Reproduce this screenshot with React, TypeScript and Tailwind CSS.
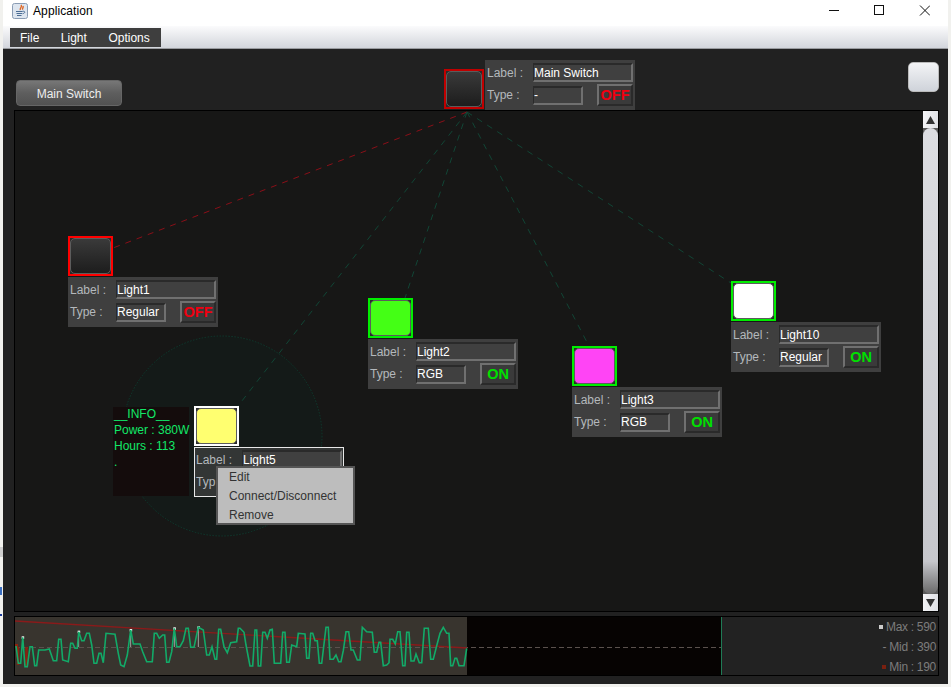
const wave = [
[48,138],[55,190],[62,190],[68,112],[75,200],[82,200],[90,140],[97,140],[104,197],[110,197],[116,150],[135,150],[148,147],[160,182],[170,182],[176,118],[183,118],[188,180],[205,185],[212,130],[218,130],[225,145],[232,145],[236,95],[245,122],[252,122],[260,100],[268,100],[275,135],[282,190],[290,190],[297,160],[303,160],[310,188],[318,100],[345,103],[355,160],[362,195],[372,200],[382,165],[392,90],[400,132],[420,132],[428,155],[440,185],[457,185],[463,100],[470,100],[478,115],[488,105],[494,105],[500,187],[507,187],[515,155],[523,85],[530,140],[540,140],[550,122],[558,85],[565,85],[572,142],[582,142],[595,82],[610,90],[620,165],[628,165],[636,140],[645,178],[650,178],[656,88],[662,88],[672,140],[682,158],[692,128],[710,125],[715,85],
[720,85],[732,97],[738,135],[750,198],[758,198],[765,90],[770,90],[775,198],[782,198],[788,97],[795,97],[802,115],[810,90],[817,88],[823,190],[842,190],[848,97],[855,97],[860,187],[868,187],[875,135],[890,140],[895,100],[915,102],[920,175],[927,175],[932,100],[938,100],[945,122],[952,122],[958,190],[965,190],[978,82],[985,82],[990,178],[1000,178],[1008,165],[1016,185],[1023,185],[1030,152],[1038,95],[1046,95],[1053,150],[1060,150],[1072,180],[1080,180],[1087,82],[1100,95],[1117,97],[1123,157],[1130,157],[1137,127],[1142,127],[1150,197],[1160,195],[1167,188],[1170,118],[1178,118],[1186,132],[1193,95],[1200,95],[1208,197],[1215,197],[1220,97],[1227,97],[1233,183],[1242,183],[1248,162],[1258,188],[1265,188],[1273,85],[1285,85],[1292,178],[1300,178],[1310,137],[1320,100],[1330,82],[1340,100],[1347,100],[1352,197],[1358,197],[1365,175],[1370,175],[1377,197],[1392,197],[1400,145],
];
const wavePoints = wave.map(([x, y]) => `${(x / 3 - 15).toFixed(1)},${(y / 3).toFixed(1)}`).join(" ");
const peaks = [[48,138],[68,112],[236,95],[392,90],[523,85],[595,82]];

const field = "flex h-[19px] items-center border-2 border-l-[1px] border-b-[#707070] border-l-[#2a2a2a] border-r-[#707070] border-t-[#2a2a2a] bg-[#404040] leading-none text-white";

function Panel({ label, type, on }: { label: string; type: string; on: boolean }) {
  return (
    <div className="flex h-[50px] w-[150px] flex-col gap-[2px] bg-[#3f3f3f] pl-[2px] pt-[3px] text-[12px]">
      <div className="flex h-[19px] items-center">
        <span className="w-[46px] shrink-0 text-[#b4b8bc]">Label :</span>
        <span className={`${field} w-[100px]`}>{label}</span>
      </div>
      <div className="flex h-[22px] items-center">
        <span className="w-[46px] shrink-0 text-[#b4b8bc]">Type :</span>
        <span className={`${field} w-[50px]`}>{type}</span>
        <span className={`ml-[14px] flex h-[22px] w-[36px] items-center justify-center border-2 border-b-[#2a2a2a] border-l-[#707070] border-r-[#2a2a2a] border-t-[#707070] bg-[#3a3a3a] text-[14.5px] font-bold leading-none ${on ? "text-[#00e000]" : "text-[#f00010]"}`}>{on ? "ON" : "OFF"}</span>
      </div>
    </div>
  );
}

function Lamp({ border, fill }: { border: string; fill: string }) {
  return (
    <div className={`h-[40px] w-[45px] border-2 bg-[#2a2a2a] ${border}`}>
      <div className={`h-full w-full rounded-[5px] border border-[#5c5c5c] ${fill}`} />
    </div>
  );
}

function Node({ pos, label, type, on, border, fill }: { pos: string; label: string; type: string; on: boolean; border: string; fill: string }) {
  return (
    <div className={`absolute flex flex-col gap-[1px] ${pos}`}>
      <Lamp border={border} fill={fill} />
      <Panel label={label} type={type} on={on} />
    </div>
  );
}

export default function App() {
  return (
    <div className="relative h-[687px] w-[951px] overflow-hidden bg-[#f1f1ee] pb-[3px] pl-[3px] pr-[3px] font-['Liberation_Sans',Arial,sans-serif]">
      <div className="absolute left-0 top-[547px] h-[10px] w-[3px] bg-[#cfcfcf]" />
      <div className="absolute left-0 top-[587px] h-[8px] w-[2px] bg-[#3a6ec0]" />
      <div className="absolute left-0 top-[614px] h-[2px] w-[2px] bg-[#1a3a9a]" />
      <div className="flex h-[684px] flex-col">
        <header className="flex h-[26px] shrink-0 items-start bg-white pt-[3px]">
          <svg className="ml-[9px] h-[16px] w-[16px]" viewBox="0 0 16 16">
            <rect x="0.5" y="0.5" width="15" height="15" rx="2" fill="#dde5ef" stroke="#8a9cb4" />
            <path d="M9 2c2 2-2 3-.5 5M11 3c.8 1.6-1 2.4-.3 3.6" stroke="#e0641e" strokeWidth="1.4" fill="none" />
            <path d="M4 8.5h6.5M4.5 10.5h5.5M5 12.5h4.5" stroke="#4a6c94" strokeWidth="1.1" fill="none" />
            <path d="M10.5 8.3c3-.5 3 2 0 2.4" stroke="#4a6c94" fill="none" />
          </svg>
          <span className="ml-[5px] text-[12px] leading-[16px] tracking-[0.1px] text-black">Application</span>
          <svg className="ml-auto mr-[18px] mt-[2px] h-[12px] w-[101px]" viewBox="0 0 101 12" fill="none" stroke="#111">
            <path d="M0 5.5h10" />
            <rect x="45.5" y="0.5" width="9" height="9" />
            <path d="M91 .5l10 10M101 .5l-10 10" />
          </svg>
        </header>
        <div className="flex h-[23px] shrink-0 items-start border-b border-b-[#9a9ca0] bg-gradient-to-b from-[#fbfbfc] to-[#d3d6dc] pl-[7px] pt-[2px]">
          <nav className="flex h-[19px] w-[151px] items-center gap-[21.5px] bg-[#3e3e3e] pl-[10px] text-[12px] text-white">
            <span>File</span>
            <span>Light</span>
            <span>Options</span>
          </nav>
        </div>
        <main className="relative flex flex-1 flex-col bg-[#212121] pl-[11px] pr-[9px]">
          <div className="flex h-[61px] shrink-0 items-start justify-between">
            <button className="ml-[2px] mt-[31px] flex h-[26px] w-[106px] items-center justify-center rounded-[4px] border border-[#666] bg-gradient-to-b from-[#777777] via-[#5e5e5e] to-[#525252] pt-[1px] text-[12px] text-[#eeeeee]">Main Switch</button>
            <div className="mt-[13px] h-[30px] w-[31px] rounded-[5px] border border-[#bbb] bg-gradient-to-b from-[#f3f4f6] to-[#cfd3da]" />
          </div>
          <div className="absolute left-[441px] top-[11px] flex items-start">
            <div className="mt-[9px] h-[40px] w-[40px] border-2 border-[#c00000] bg-[#2a2a2a]">
              <div className="h-full w-full rounded-[5px] border border-[#5c5c5c] bg-gradient-to-b from-[#3a3a3a] to-[#1d1d1d]" />
            </div>
            <div className="ml-[1px]"><Panel label="Main Switch" type="-" on={false} /></div>
          </div>
          <div className="flex h-[502px] shrink-0 border border-black">
            <div className="relative flex-1 overflow-hidden bg-[#171716]">
              <svg className="absolute left-[-3px] top-[-1px] h-[502px] w-[910px]" viewBox="12 110 910 502" fill="none">
                <circle cx="222" cy="436" r="100" fill="#141a18" stroke="#0f3a2e" strokeDasharray="1.5 1.5" />
                <g strokeDasharray="6 6" strokeWidth="1">
                  <path d="M467 112L113 248" stroke="#8a0f18" />
                  <path d="M467 112L405 298" stroke="#114535" />
                  <path d="M467 112L590 348" stroke="#114535" />
                  <path d="M467 112L731 283" stroke="#114535" />
                  <path d="M467 112L238 406" stroke="#114535" />
                </g>
              </svg>
              <Node pos="left-[53px] top-[125px]" label="Light1" type="Regular" on={false} border="border-[#ff0000]" fill="bg-gradient-to-b from-[#3a3a3a] to-[#1d1d1d]" />
              <Node pos="left-[353px] top-[187px]" label="Light2" type="RGB" on border="border-[#00ee00]" fill="bg-[#44ff15]" />
              <Node pos="left-[557px] top-[235px]" label="Light3" type="RGB" on border="border-[#00ee00]" fill="bg-[#ff44f5]" />
              <Node pos="left-[716px] top-[170px]" label="Light10" type="Regular" on border="border-[#00ee00]" fill="bg-white" />
              <div className="absolute left-[98px] top-[296px] flex h-[89px] w-[76px] flex-col gap-[3px] bg-[#140c0c] pl-[1px] pt-[1px] text-[12px] leading-[13px] text-[#12e868]">
                <span>__INFO__</span>
                <span className="whitespace-nowrap">Power : 380W</span>
                <span>Hours : 113</span>
                <span>.</span>
              </div>
              <div className="absolute left-[179px] top-[295px] flex flex-col gap-[1px]">
                <Lamp border="border-white" fill="bg-[#ffff70]" />
                <div className="flex h-[50px] w-[150px] flex-col gap-[2px] bg-[#333635] pl-[2px] pt-[3px] text-[12px] outline outline-1 -outline-offset-1 outline-[#e8e8e8]">
                  <div className="flex h-[19px] items-center">
                    <span className="w-[46px] shrink-0 text-[#b4b8bc]">Label :</span>
                    <span className={`${field} w-[100px]`}>Light5</span>
                  </div>
                  <div className="flex h-[22px] items-center">
                    <span className="text-[#b4b8bc]">Typ</span>
                  </div>
                </div>
              </div>
              <div className="absolute left-[201px] top-[355px] flex h-[59px] w-[139px] flex-col gap-[6px] border-2 border-[#555] bg-[#bdbdbd] pl-[11px] pt-[3px] text-[12px] leading-[13px] text-[#333]">
                <span>Edit</span>
                <span>Connect/Disconnect</span>
                <span>Remove</span>
              </div>
            </div>
            <div className="flex w-[15px] shrink-0 flex-col bg-[#5a5a5a]">
              <div className="flex h-[17px] items-center justify-center bg-gradient-to-r from-[#f4f4f6] to-[#dfe1e5]">
                <svg width="9" height="8" viewBox="0 0 9 8"><path d="M4.5 0L9 8H0z" fill="#333" /></svg>
              </div>
              <div className="flex-1 rounded-[8px] bg-gradient-to-b from-[#dcdde1] via-[#c6c7cc] via-[93%] to-[#6a6a6a]" />
              <div className="flex h-[17px] items-center justify-center bg-gradient-to-r from-[#f4f4f6] to-[#dfe1e5]">
                <svg width="9" height="8" viewBox="0 0 9 8"><path d="M4.5 8L9 0H0z" fill="#333" /></svg>
              </div>
            </div>
          </div>
          <div className="mt-[4px] flex h-[60px] w-[925px] shrink-0 border border-black">
            <div className="relative h-full w-[707px] shrink-0 border-r border-r-[#1f7a55] bg-[#060302]">
              <div className="h-full w-[452px] bg-[#38342e]" />
              <svg className="absolute left-0 top-0 h-[58px] w-[706px]" viewBox="0 617 706 58" fill="none">
                <path d="M0 647.5H706" stroke="#5a514d" strokeDasharray="5 3" />
                <path d="M0 621L452 648" stroke="#8a1a1a" strokeWidth="1.4" />
                {peaks.map(([x, y]) => (
                  <g key={x}>
                    <path d={`M${x / 3 - 15} ${600 + y / 3}V647`} stroke="#a0a0a0" />
                    <rect x={x / 3 - 16} y={600 + y / 3 - 1} width="2.5" height="2.5" fill="#fff" />
                  </g>
                ))}
                <path d="M3 647V665M11.5 647V667" stroke="#8a2410" strokeWidth="2.5" />
                <rect x="0" y="644" width="3" height="4" fill="#8a2410" />
                <polyline points={wavePoints} transform="translate(0 600)" stroke="#12aa68" strokeWidth="1.6" />
              </svg>
            </div>
            <div className="flex flex-1 flex-col items-end gap-[6px] bg-[#222222] pr-[2px] pt-[3px] text-[12px] leading-[14px] tracking-[-0.3px] text-[#7c7c7c]">
              <div className="flex items-center gap-[3px]"><span className="h-[4px] w-[4px] bg-[#cccccc]" />Max : 590</div>
              <div>- Mid : 390</div>
              <div className="flex items-center gap-[3px]"><span className="h-[4px] w-[4px] bg-[#7a2010]" />Min : 190</div>
            </div>
          </div>
        </main>
      </div>
    </div>
  );
}
